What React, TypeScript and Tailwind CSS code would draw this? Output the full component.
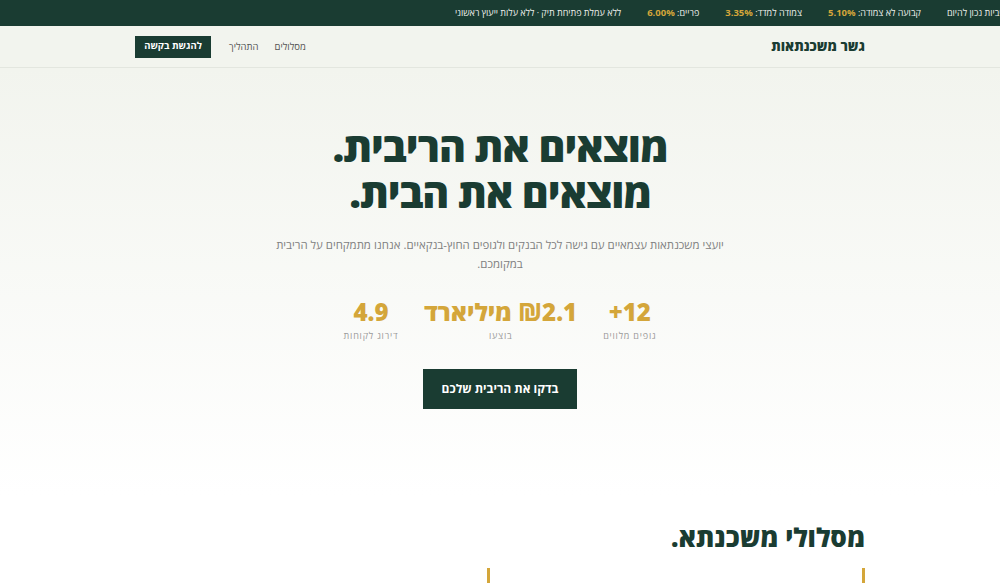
import React from "react";

const rates = [
  { label: "קבועה לא צמודה:", value: "5.10%" },
  { label: "צמודה למדד:", value: "3.35%" },
  { label: "פריים:", value: "6.00%" },
];

const stats = [
  { value: "+12", label: "גופים מלווים", ltr: true },
  { value: "₪2.1 מיליארד", label: "בוצעו", ltr: false },
  { value: "4.9", label: "דירוג לקוחות", ltr: true },
];

const openSans = { fontFamily: '"Open Sans", "DejaVu Sans", sans-serif' };

const App: React.FC = () => {
  return (
    <div dir="rtl" className="min-h-screen bg-white text-[#1a3c32]" style={openSans}>
      {/* ticker */}
      <div className="h-[26px] bg-[#1a3c32] overflow-hidden flex items-center">
        <div className="flex items-center gap-[26px] whitespace-nowrap text-[9px] text-[#eef0ec] -mr-[6px]">
          <span>ריביות נכון להיום</span>
          {rates.map((r) => (
            <span key={r.value}>
              {r.label} <b className="text-[#d4a63a] text-[9.5px] font-bold">{r.value}</b>
            </span>
          ))}
          <span>ללא עמלת פתיחת תיק · ללא עלות ייעוץ ראשוני</span>
        </div>
      </div>

      {/* nav */}
      <div className="bg-[#f2f4ee] border-b border-[#e3e6df]">
        <div className="max-w-[730px] mx-auto h-[41px] flex items-center justify-between">
          <div className="text-[13.5px] font-extrabold">גשר משכנתאות</div>
          <div className="flex items-center gap-4">
            <a className="text-[9.5px] text-[#555] pt-[2px]">מסלולים</a>
            <a className="text-[9.5px] text-[#555] pt-[2px] ml-[2px]">התהליך</a>
            <button className="bg-[#1a3c32] text-white text-[9.5px] font-bold w-[76px] h-[22px]">
              להגשת בקשה
            </button>
          </div>
        </div>
      </div>

      {/* hero */}
      <div className="bg-gradient-to-b from-[#f2f4ee] to-white pt-[55px] pb-[86px]">
        <div className="max-w-[730px] mx-auto flex flex-col items-center text-center">
          <h1 className="text-[41px] leading-[46px] font-extrabold tracking-tight">
            מוצאים את הריבית.
            <br />
            מוצאים את הבית.
          </h1>
          <p className="mt-[20px] max-w-[450px] text-[11.4px] leading-[19px] text-[#808080]">
            יועצי משכנתאות עצמאיים עם גישה לכל הבנקים ולגופים החוץ-בנקאיים. אנחנו מתמקחים על הריבית
            במקומכם.
          </p>
          <div className="mt-[24px] flex gap-[26px]">
            {stats.map((s) => (
              <div key={s.label} className="flex flex-col items-center">
                <div
                  dir={s.ltr ? "ltr" : "rtl"}
                  className="text-[24px] leading-[30px] font-extrabold text-[#d4a63a]"
                >
                  {s.value}
                </div>
                <div className="mt-[2px] text-[9px] tracking-[0.8px] text-[#9a9a9a]">{s.label}</div>
              </div>
            ))}
          </div>
          <button className="mt-[26px] bg-[#1a3c32] text-white text-[12px] font-bold w-[154px] h-[40px]">
            בדקו את הריבית שלכם
          </button>
        </div>
      </div>

      {/* tracks */}
      <div className="max-w-[730px] mx-auto pt-[25px]">
        <h2 className="text-[26px] leading-[34px] font-extrabold">מסלולי משכנתא.</h2>
        <div className="mt-[14px] grid grid-cols-2 gap-[20px]">
          <div className="h-[120px] border-r-[3px] border-[#d4a63a]" />
          <div className="h-[120px] border-r-[3px] border-[#d4a63a]" />
        </div>
      </div>
    </div>
  );
};

export default App;
